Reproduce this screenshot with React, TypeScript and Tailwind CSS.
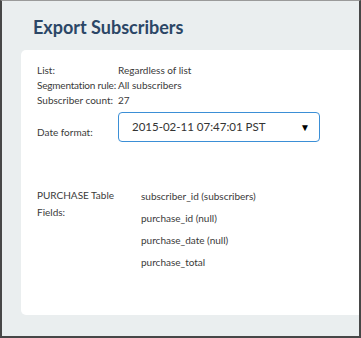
import React from "react";

export default function App() {
  const font = { fontFamily: "Lato, 'Open Sans', sans-serif" };
  return (
    <div
      style={font}
      className="w-[361px] h-[338px] bg-[#eaeeef] border-2 border-[#474747] border-t border-t-[#9a9a9a] flex flex-col"
    >
      <div className="h-[49px] pl-[31px] pt-[15px]">
        <h1 className="text-[18px] leading-[22px] font-bold text-[#2b4666]">Export Subscribers</h1>
      </div>
      <div className="ml-[19px] mb-[21px] flex-1 bg-white rounded-l-[5px] pl-[16px] pt-[13px] text-[10px] text-[#3a3a3a] whitespace-nowrap">
        <div className="flex h-[15px] items-center">
          <div className="w-[81px] shrink-0">List:</div>
          <div>Regardless of list</div>
        </div>
        <div className="flex h-[15px] items-center">
          <div className="w-[81px] shrink-0 tracking-[-0.2px]">Segmentation rule:</div>
          <div>All subscribers</div>
        </div>
        <div className="flex h-[15px] items-center">
          <div className="w-[81px] shrink-0">Subscriber count:</div>
          <div>27</div>
        </div>
        <div className="flex mt-[4px]">
          <div className="w-[81px] shrink-0 pt-[13px] leading-[15px]">Date format:</div>
          <div className="w-[202px] h-[30px] border border-[#3b8fd6] rounded-[4px] flex items-center justify-between pl-[13px] pr-[9px] text-[11.5px] text-[#333]">
            <span>2015-02-11 07:47:01 PST</span>
            <span className="text-[10px] text-black">▼</span>
          </div>
        </div>
        <div className="flex mt-[45px]">
          <div className="w-[104px] shrink-0 leading-[17px]">
            <div>PURCHASE Table</div>
            <div>Fields:</div>
          </div>
          <div className="leading-[22px] -mt-[2px]">
            <div>subscriber_id (subscribers)</div>
            <div>purchase_id (null)</div>
            <div>purchase_date (null)</div>
            <div>purchase_total</div>
          </div>
        </div>
      </div>
    </div>
  );
}
